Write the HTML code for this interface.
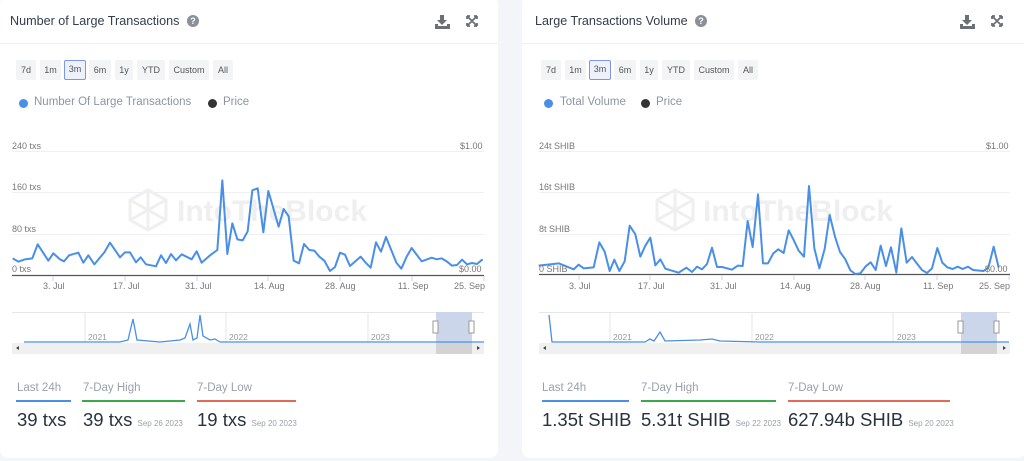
<!DOCTYPE html>
<html><head><meta charset="utf-8"><style>
*{margin:0;padding:0;box-sizing:border-box}
body{width:1024px;height:461px;background:#f4f5f9;font-family:"Liberation Sans",sans-serif;position:relative;overflow:hidden}
.card{position:absolute;top:-4px;height:462px;background:#fff;border-radius:8px}
.a{position:absolute;white-space:nowrap}
.t{font-size:12.6px;color:#333d4d}
.q{width:12px;height:12px;border-radius:50%;background:#8a8f98;color:#fff;font-size:9px;font-weight:bold;text-align:center;line-height:12px}
.hl{height:1px;background:#eceef2}
.b{top:60px;height:20px;background:#f3f4f6;border-radius:2px;font-size:9px;color:#555;text-align:center;line-height:20px}
.sel{border:1.5px solid #7a96f0;line-height:17px;background:#eef1fb}
.lg{top:96px;font-size:11.5px;color:#8c95a3}
.dot{top:99px;width:9px;height:9px;border-radius:50%}
.ax{font-size:9px;color:#777}
.sl{top:382px;font-size:11.5px;color:#9aa0aa}
.ln{top:400px;height:2px}
.v{top:409px;font-size:18.5px;color:#2a3240}
.v small{font-size:8px;color:#9aa0aa}
</style></head><body>
<div class="card" style="left:0;width:498px"></div>
<div class="card" style="left:522px;width:504px"></div>

<div class="a t" style="left:10px;top:14px">Number of Large Transactions</div>
<div class="a q" style="left:187px;top:15px">?</div>
<div class="a t" style="left:535px;top:14px">Large Transactions Volume</div>
<div class="a q" style="left:695px;top:15px">?</div>
<svg class="a" style="left:0;top:0" width="1024" height="461">
<g fill="#6b6f76">
<path d="M440 15h4v5h3l-5 5-5-5h3z M435 24h3v2h9v-2h3v5h-15z"/>
<path d="M965 15h4v5h3l-5 5-5-5h3z M960 24h3v2h9v-2h3v5h-15z"/>
</g>
<g stroke="#6b6f76" stroke-width="1.8" fill="none">
<path d="M467 16l10 10M477 16l-10 10M467 16h3M467 16v3M477 16h-3M477 16v3M467 26h3M467 26v-3M477 26h-3M477 26v-3"/>
<path d="M992 16l10 10M1002 16l-10 10M992 16h3M992 16v3M1002 16h-3M1002 16v3M992 26h3M992 26v-3M1002 26h-3M1002 26v-3"/>
</g>
<g stroke="#eef0f3" stroke-width="1">
<path d="M12 151.5H484M12 192.5H484M12 234.5H484M539 151.5H1010M539 192.5H1010M539 234.5H1010"/>
</g>
<g stroke="#555" stroke-width="1.2"><path d="M12 275.5H484M539 274.5H1010"/></g>
<g stroke="#ccd6eb"><path d="M53 276v5M125 276v5M197 276v5M268 276v5M340 276v5M412 276v5M484 276v5M579 275v5M650 275v5M722 275v5M794 275v5M865 275v5M937 275v5M1009 275v5"/></g>
<g fill="none" stroke="#efefef" stroke-width="3">
<path d="M148 190l18 10v20l-18 10-18-10v-20z M130 200l36 20M166 200l-36 20M148 190v40"/>
<path d="M675 190l18 10v20l-18 10-18-10v-20z M657 200l36 20M693 200l-36 20M675 190v40"/>
</g>
<text x="177" y="221" font-family="Liberation Sans" font-weight="bold" font-size="30" fill="#efefef">IntoTheBlock</text>
<text x="703" y="221" font-family="Liberation Sans" font-weight="bold" font-size="30" fill="#efefef">IntoTheBlock</text>
<g transform="scale(0.33333)"><polyline fill="none" stroke="#4a8fe7" stroke-width="6" stroke-linejoin="round" points="38,775 55,785 75,778 97,775 113,733 145,782 160,760 180,778 192,784 207,766 235,758 250,788 265,766 283,793 313,757 330,728 360,772 375,757 390,757 408,787 422,772 438,793 468,799 483,766 498,789 513,762 528,781 545,763 575,778 590,754 605,788 630,766 652,750 667,541 682,762 697,670 712,718 728,721 743,694 757,571 773,565 790,697 805,573 836,680 851,627 866,649 881,782 897,790 912,732 928,750 943,752 958,770 973,782 990,813 1005,801 1020,758 1035,764 1050,798 1082,770 1097,788 1112,803 1128,727 1143,755 1158,711 1173,748 1189,788 1204,806 1220,770 1235,744 1265,784 1295,773 1310,778 1325,775 1340,784 1356,797 1371,795 1386,779 1401,793 1416,789 1431,792 1448,778"/></g>
<g transform="translate(512,130) scale(0.33333)"><polyline fill="none" stroke="#4a8fe7" stroke-width="6" stroke-linejoin="round" points="80,407 140,400 185,418 200,404 215,415 245,412 262,337 278,365 293,423 307,389 322,423 338,394 353,287 370,313 385,380 400,347 415,323 430,406 445,388 460,416 500,428 523,413 540,426 555,410 570,418 585,402 600,353 615,411 630,411 660,419 677,407 692,408 707,273 722,351 738,193 753,400 768,400 784,370 799,358 815,369 830,301 845,330 860,362 876,380 891,168 907,355 922,415 938,357 953,255 969,320 984,366 1000,388 1015,421 1030,432 1045,430 1061,409 1076,397 1091,420 1106,347 1122,408 1137,352 1153,428 1168,295 1184,398 1200,381 1215,401 1230,420 1245,429 1260,415 1276,354 1291,398 1306,412 1322,417 1337,410 1352,417 1368,410 1383,420 1414,423 1429,413 1445,350 1460,413"/></g>
<g stroke="#e6e6e6"><path d="M12 312.5H484M539 312.5H1010M85 312v31M226 312v31M368 312v31M610 312v31M752 312v31M893 312v31"/></g>
<rect x="436" y="312" width="36" height="31" fill="#ccd6eb"/>
<rect x="961" y="312" width="36" height="31" fill="#ccd6eb"/>
<rect x="12" y="343" width="472" height="11" fill="#f0f0f0"/>
<rect x="539" y="343" width="471" height="11" fill="#f0f0f0"/>
<rect x="436" y="343" width="36" height="11" fill="#d3d3d3"/>
<rect x="961" y="343" width="36" height="11" fill="#d3d3d3"/>
<g fill="#fff" stroke="#999"><rect x="433" y="321" width="5" height="12"/><rect x="469" y="321" width="5" height="12"/><rect x="958" y="321" width="5" height="12"/><rect x="994" y="321" width="5" height="12"/></g>
<g fill="#444"><path d="M16 348l3-2v4zM480 348l-3-2v4zM543 348l3-2v4zM1006 348l-3-2v4z"/></g>
<g fill="none" stroke="#4a8fe7" stroke-width="1.3">
<polyline points="24,342 120,342 128,340 133,319 137,340 160,342 180,340 185,338 190,324 193,340 197,338 200,315 203,336 210,340 215,339 220,342 484,342"/>
<polyline points="549,315 552,342 645,342 650,339 654,341 660,332 665,341 700,340 712,339 720,341 760,342 1009,342"/>
</g>
<g font-family="Liberation Sans" font-size="8.5" fill="#999">
<text x="88" y="340">2021</text><text x="229" y="340">2022</text><text x="371" y="340">2023</text>
<text x="613" y="340">2021</text><text x="755" y="340">2022</text><text x="897" y="340">2023</text>
</g>
</svg>
<div class="a hl" style="left:0;top:43px;width:498px"></div>
<div class="a hl" style="left:522px;top:43px;width:502px"></div>

<div class="a b" style="left:16px;width:20px">7d</div><div class="a b" style="left:40px;width:21px">1m</div><div class="a b sel" style="left:64px;width:22px">3m</div><div class="a b" style="left:89px;width:22px">6m</div><div class="a b" style="left:115px;width:18px">1y</div><div class="a b" style="left:137px;width:28px">YTD</div><div class="a b" style="left:169px;width:40px">Custom</div><div class="a b" style="left:213px;width:20px">All</div>
<div class="a b" style="left:541px;width:20px">7d</div><div class="a b" style="left:565px;width:21px">1m</div><div class="a b sel" style="left:589px;width:22px">3m</div><div class="a b" style="left:614px;width:22px">6m</div><div class="a b" style="left:640px;width:18px">1y</div><div class="a b" style="left:662px;width:28px">YTD</div><div class="a b" style="left:694px;width:40px">Custom</div><div class="a b" style="left:738px;width:20px">All</div>

<div class="a dot" style="left:19px;background:#4a8fe7"></div><div class="a lg" style="left:34px">Number Of Large Transactions</div>
<div class="a dot" style="left:208px;background:#333"></div><div class="a lg" style="left:223px">Price</div>
<div class="a dot" style="left:544px;background:#4a8fe7"></div><div class="a lg" style="left:560px">Total Volume</div>
<div class="a dot" style="left:641px;background:#333"></div><div class="a lg" style="left:656px">Price</div>

<div class="a ax" style="left:12px;top:141px">240 txs</div><div class="a ax" style="left:12px;top:182px">160 txs</div><div class="a ax" style="left:12px;top:224px">80 txs</div><div class="a ax" style="left:12px;top:264px">0 txs</div>
<div class="a ax" style="left:460px;top:141px">$1.00</div><div class="a ax" style="left:459px;top:264px">$0.00</div>
<div class="a ax" style="left:539px;top:141px">24t SHIB</div><div class="a ax" style="left:539px;top:182px">16t SHIB</div><div class="a ax" style="left:539px;top:224px">8t SHIB</div><div class="a ax" style="left:539px;top:264px">0 SHIB</div>
<div class="a ax" style="left:986px;top:141px">$1.00</div><div class="a ax" style="left:985px;top:264px">$0.00</div>
<div class="a ax" style="left:43px;top:281px">3. Jul</div><div class="a ax" style="left:113px;top:281px">17. Jul</div><div class="a ax" style="left:185px;top:281px">31. Jul</div><div class="a ax" style="left:254px;top:281px">14. Aug</div><div class="a ax" style="left:325px;top:281px">28. Aug</div><div class="a ax" style="left:398px;top:281px">11. Sep</div><div class="a ax" style="left:454px;top:281px">25. Sep</div>
<div class="a ax" style="left:569px;top:281px">3. Jul</div><div class="a ax" style="left:638px;top:281px">17. Jul</div><div class="a ax" style="left:710px;top:281px">31. Jul</div><div class="a ax" style="left:780px;top:281px">14. Aug</div><div class="a ax" style="left:850px;top:281px">28. Aug</div><div class="a ax" style="left:923px;top:281px">11. Sep</div><div class="a ax" style="left:979px;top:281px">25. Sep</div>

<div class="a sl" style="left:17px">Last 24h</div><div class="a ln" style="left:16px;width:55px;background:#4a8fe7"></div><div class="a v" style="left:17px">39 txs</div>
<div class="a sl" style="left:83px">7-Day High</div><div class="a ln" style="left:82px;width:103px;background:#3aaa48"></div><div class="a v" style="left:83px">39 txs <small>Sep 26 2023</small></div>
<div class="a sl" style="left:197px">7-Day Low</div><div class="a ln" style="left:197px;width:99px;background:#e46a55"></div><div class="a v" style="left:197px">19 txs <small>Sep 20 2023</small></div>
<div class="a sl" style="left:542px">Last 24h</div><div class="a ln" style="left:542px;width:87px;background:#4a8fe7"></div><div class="a v" style="left:542px">1.35t SHIB</div>
<div class="a sl" style="left:641px">7-Day High</div><div class="a ln" style="left:641px;width:135px;background:#3aaa48"></div><div class="a v" style="left:641px">5.31t SHIB <small>Sep 22 2023</small></div>
<div class="a sl" style="left:788px">7-Day Low</div><div class="a ln" style="left:788px;width:162px;background:#e46a55"></div><div class="a v" style="left:788px">627.94b SHIB <small>Sep 20 2023</small></div>
</body></html>
